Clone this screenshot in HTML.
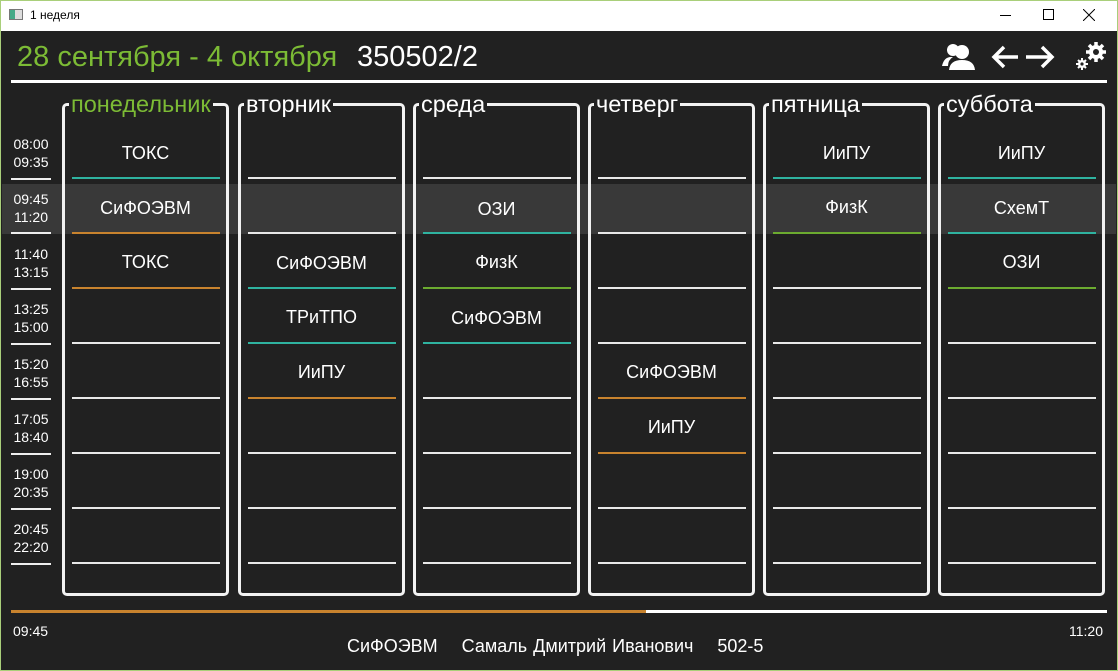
<!DOCTYPE html>
<html><head><meta charset="utf-8"><style>
*{margin:0;padding:0;box-sizing:border-box}
body{width:1118px;height:671px;background:#212121;font-family:"Liberation Sans",sans-serif;color:#fff;position:relative;overflow:hidden}
.a{position:absolute}
.tb{left:0;top:0;width:1118px;height:31px;background:#fff;border:1px solid #a9cf7a;border-bottom:none}
.frame{left:0;top:0;width:1118px;height:671px;border:1px solid #a9cf7a;pointer-events:none}
.box{top:103px;width:167px;height:493px;border:3px solid #f2f2f2;border-radius:5px}
.lbl{top:90px;font-size:23.5px;background:#212121;padding:0 2px;line-height:28px}
.ln{height:2px;width:148px;background:#e8e8e8}
.t{width:167px;text-align:center;font-size:18px;line-height:20px}
.tm{left:11px;width:40px;text-align:center;font-size:14px;line-height:18px}
.tl{left:11px;width:40px;height:2px;background:#eee}
.teal{background:#2fb3a0}.or{background:#c8832e}.gr{background:#6cab30}
</style></head><body>
<div class="a tb"></div>
<div class="a" style="left:9px;top:9px;width:14px;height:11px;border:1px solid #777;background:linear-gradient(90deg,#4a8 0 40%,#ddd 40%)"></div>
<div class="a" style="left:30px;top:8px;font-size:12px;color:#000">1 неделя</div>
<div class="a" style="left:1000px;top:15px;width:11px;height:1px;background:#000"></div>
<div class="a" style="left:1043px;top:9px;width:11px;height:11px;border:1px solid #000"></div>
<svg class="a" style="left:1083px;top:9px" width="12" height="12"><path d="M0 0L12 12M12 0L0 12" stroke="#000" stroke-width="1"/></svg>

<div class="a" style="left:17px;top:41px;font-size:29px;color:#7cbb35">28 сентября - 4 октября</div>
<div class="a" style="left:357px;top:41px;font-size:29px">350502/2</div>
<svg class="a" style="left:940px;top:40px" width="36" height="32" viewBox="0 0 36 32"><circle cx="13" cy="10" r="6" fill="#fff"/><path d="M2 26 Q4 17 11 17 L13 17 Q8 20 8 26Z" fill="#fff"/><circle cx="22" cy="12" r="7" fill="#fff"/><path d="M9 30 Q10 20 22 20 Q34 20 35 30Z" fill="#fff"/></svg>
<svg class="a" style="left:990px;top:44px" width="68" height="26" viewBox="0 0 68 26"><path d="M28 13H4M14 3L4 13L14 23" stroke="#fff" stroke-width="3.5" fill="none"/><path d="M36 13H62M52 3L62 13L52 23" stroke="#fff" stroke-width="3.5" fill="none"/></svg>
<svg class="a" style="left:1074px;top:40px" width="34" height="32" viewBox="0 0 34 32"><g fill="#fff"><circle cx="22" cy="12" r="7"/><g stroke="#fff" stroke-width="3.5"><path d="M22 2V22M12 12H32M15 5L29 19M29 5L15 19"/></g><circle cx="8" cy="24" r="4"/><g stroke="#fff" stroke-width="2"><path d="M8 18V30M2 24H14M4 20L12 28M12 20L4 28"/></g></g><circle cx="22" cy="12" r="3" fill="#212121"/><circle cx="8" cy="24" r="1.6" fill="#212121"/></svg>
<div class="a" style="left:11px;top:80px;width:1096px;height:3px;background:#fff"></div>

<div class="a" style="left:2px;top:184px;width:1114px;height:50px;background:#393939"></div>

<div class="a tm" style="top:135px">08:00<br>09:35</div><div class="a tl" style="top:178px"></div>
<div class="a tm" style="top:190px">09:45<br>11:20</div><div class="a tl" style="top:232px"></div>
<div class="a tm" style="top:245px">11:40<br>13:15</div><div class="a tl" style="top:288px"></div>
<div class="a tm" style="top:300px">13:25<br>15:00</div><div class="a tl" style="top:343px"></div>
<div class="a tm" style="top:355px">15:20<br>16:55</div><div class="a tl" style="top:398px"></div>
<div class="a tm" style="top:410px">17:05<br>18:40</div><div class="a tl" style="top:453px"></div>
<div class="a tm" style="top:465px">19:00<br>20:35</div><div class="a tl" style="top:508px"></div>
<div class="a tm" style="top:520px">20:45<br>22:20</div><div class="a tl" style="top:563px"></div>

<div class="a box" style="left:62px"></div><div class="a lbl" style="left:69px;color:#7cbb35">понедельник</div>
<div class="a box" style="left:238px"></div><div class="a lbl" style="left:244px">вторник</div>
<div class="a box" style="left:413px"></div><div class="a lbl" style="left:419px">среда</div>
<div class="a box" style="left:588px"></div><div class="a lbl" style="left:594px">четверг</div>
<div class="a box" style="left:763px"></div><div class="a lbl" style="left:769px">пятница</div>
<div class="a box" style="left:938px"></div><div class="a lbl" style="left:944px">суббота</div>

<div class="a t" style="left:62px;top:143px">ТОКС</div>
<div class="a t" style="left:62px;top:198px">СиФОЭВМ</div>
<div class="a t" style="left:62px;top:252px">ТОКС</div>
<div class="a ln teal" style="left:72px;top:177px"></div><div class="a ln or" style="left:72px;top:232px"></div><div class="a ln or" style="left:72px;top:287px"></div><div class="a ln" style="left:72px;top:342px"></div><div class="a ln" style="left:72px;top:397px"></div><div class="a ln" style="left:72px;top:452px"></div><div class="a ln" style="left:72px;top:507px"></div><div class="a ln" style="left:72px;top:562px"></div>
<div class="a t" style="left:238px;top:253px">СиФОЭВМ</div>
<div class="a t" style="left:238px;top:307px">ТРиТПО</div>
<div class="a t" style="left:238px;top:362px">ИиПУ</div>
<div class="a ln" style="left:248px;top:177px"></div><div class="a ln" style="left:248px;top:232px"></div><div class="a ln teal" style="left:248px;top:287px"></div><div class="a ln teal" style="left:248px;top:342px"></div><div class="a ln or" style="left:248px;top:397px"></div><div class="a ln" style="left:248px;top:452px"></div><div class="a ln" style="left:248px;top:507px"></div><div class="a ln" style="left:248px;top:562px"></div>
<div class="a t" style="left:413px;top:199px">ОЗИ</div>
<div class="a t" style="left:413px;top:252px">ФизК</div>
<div class="a t" style="left:413px;top:308px">СиФОЭВМ</div>
<div class="a ln" style="left:423px;top:177px"></div><div class="a ln teal" style="left:423px;top:232px"></div><div class="a ln gr" style="left:423px;top:287px"></div><div class="a ln teal" style="left:423px;top:342px"></div><div class="a ln" style="left:423px;top:397px"></div><div class="a ln" style="left:423px;top:452px"></div><div class="a ln" style="left:423px;top:507px"></div><div class="a ln" style="left:423px;top:562px"></div>
<div class="a t" style="left:588px;top:362px">СиФОЭВМ</div>
<div class="a t" style="left:588px;top:417px">ИиПУ</div>
<div class="a ln" style="left:598px;top:177px"></div><div class="a ln" style="left:598px;top:232px"></div><div class="a ln" style="left:598px;top:287px"></div><div class="a ln" style="left:598px;top:342px"></div><div class="a ln or" style="left:598px;top:397px"></div><div class="a ln or" style="left:598px;top:452px"></div><div class="a ln" style="left:598px;top:507px"></div><div class="a ln" style="left:598px;top:562px"></div>
<div class="a t" style="left:763px;top:143px">ИиПУ</div>
<div class="a t" style="left:763px;top:197px">ФизК</div>
<div class="a ln teal" style="left:773px;top:177px"></div><div class="a ln gr" style="left:773px;top:232px"></div><div class="a ln" style="left:773px;top:287px"></div><div class="a ln" style="left:773px;top:342px"></div><div class="a ln" style="left:773px;top:397px"></div><div class="a ln" style="left:773px;top:452px"></div><div class="a ln" style="left:773px;top:507px"></div><div class="a ln" style="left:773px;top:562px"></div>
<div class="a t" style="left:938px;top:143px">ИиПУ</div>
<div class="a t" style="left:938px;top:198px">СхемТ</div>
<div class="a t" style="left:938px;top:252px">ОЗИ</div>
<div class="a ln teal" style="left:948px;top:177px"></div><div class="a ln teal" style="left:948px;top:232px"></div><div class="a ln gr" style="left:948px;top:287px"></div><div class="a ln" style="left:948px;top:342px"></div><div class="a ln" style="left:948px;top:397px"></div><div class="a ln" style="left:948px;top:452px"></div><div class="a ln" style="left:948px;top:507px"></div><div class="a ln" style="left:948px;top:562px"></div>

<div class="a" style="left:11px;top:610px;width:635px;height:3px;background:#c8832e"></div>
<div class="a" style="left:646px;top:610px;width:461px;height:3px;background:#fff"></div>
<div class="a" style="left:13px;top:623px;font-size:14px">09:45</div>
<div class="a" style="left:1069px;top:623px;font-size:14px">11:20</div>
<div class="a" style="left:347px;top:636px;font-size:18px;word-spacing:1px">СиФОЭВМ&nbsp;&nbsp;&nbsp;&nbsp;Самаль Дмитрий Иванович&nbsp;&nbsp;&nbsp;&nbsp;502-5</div>
<div class="a frame"></div>
</body></html>
